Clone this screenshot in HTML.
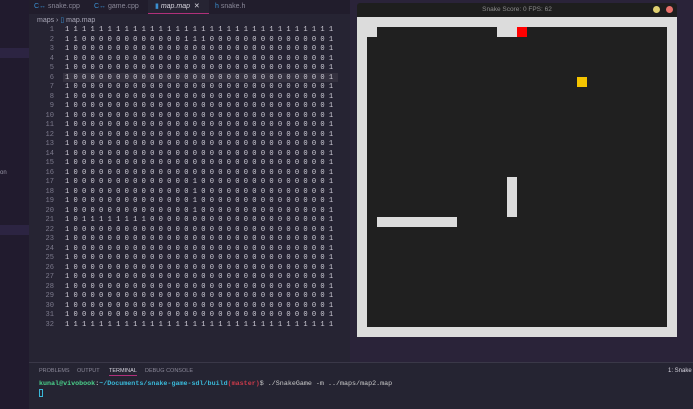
<!DOCTYPE html>
<html><head><style>
*{margin:0;padding:0;box-sizing:border-box}
body{width:693px;height:409px;overflow:hidden;background:#262433;position:relative;font-family:"Liberation Sans",sans-serif}
.abs{position:absolute}
#side{left:0;top:0;width:29px;height:409px;background:#211b2e}
#tabs{left:29px;top:0;width:664px;height:14px;background:#211d2c}
.tab{top:0;height:14px;font-size:7px;color:#8a8898;line-height:14px}
#code{left:30px;top:26px;font-family:"Liberation Mono",monospace;font-size:7.1px;line-height:9.5px;white-space:pre}
.ln{display:inline-block;width:24px;text-align:right;color:#7c7a8c;margin-right:11px}
.c{color:#d0ced8}
#game{left:350px;top:0;width:343px;height:362px;background:#2a2339}
</style></head><body>
<div class="abs" id="side"></div>
<div class="abs" style="left:0;top:48px;width:29px;height:10px;background:#2c2442"></div>
<div class="abs" style="left:0;top:225px;width:29px;height:10px;background:#2c2442"></div>
<div class="abs" style="left:0;top:170px;font-size:6px;color:#9a98a8">on</div>
<div class="abs" id="tabs"></div>
<div class="abs tab" style="left:34px"><span style="color:#3a8fd0">C↔</span> snake.cpp</div>
<div class="abs tab" style="left:94px"><span style="color:#3a8fd0">C↔</span> game.cpp</div>
<div class="abs" style="left:148px;top:0;width:61px;height:14px;background:#262433;border-bottom:1px solid #b0307a"></div>
<div class="abs tab" style="left:155px;color:#d8d6e0"><span style="color:#3a8fd0">▮</span> <i>map.map</i> &nbsp;✕</div>
<div class="abs tab" style="left:215px"><span style="color:#3a8fd0">h</span> snake.h</div>
<div class="abs" style="left:37px;top:16px;font-size:7px;color:#a8a6b6">maps › <span style="color:#3a8fd0">▯</span> map.map</div>
<div class="abs" style="left:63px;top:73px;width:275px;height:9px;background:#34313f"></div>
<div class="abs" id="code"><span class="ln">1</span><span class="c">1 1 1 1 1 1 1 1 1 1 1 1 1 1 1 1 1 1 1 1 1 1 1 1 1 1 1 1 1 1 1 1</span>
<span class="ln">2</span><span class="c">1 1 0 0 0 0 0 0 0 0 0 0 0 0 1 1 1 0 0 0 0 0 0 0 0 0 0 0 0 0 0 1</span>
<span class="ln">3</span><span class="c">1 0 0 0 0 0 0 0 0 0 0 0 0 0 0 0 0 0 0 0 0 0 0 0 0 0 0 0 0 0 0 1</span>
<span class="ln">4</span><span class="c">1 0 0 0 0 0 0 0 0 0 0 0 0 0 0 0 0 0 0 0 0 0 0 0 0 0 0 0 0 0 0 1</span>
<span class="ln">5</span><span class="c">1 0 0 0 0 0 0 0 0 0 0 0 0 0 0 0 0 0 0 0 0 0 0 0 0 0 0 0 0 0 0 1</span>
<span class="ln">6</span><span class="c">1 0 0 0 0 0 0 0 0 0 0 0 0 0 0 0 0 0 0 0 0 0 0 0 0 0 0 0 0 0 0 1</span>
<span class="ln">7</span><span class="c">1 0 0 0 0 0 0 0 0 0 0 0 0 0 0 0 0 0 0 0 0 0 0 0 0 0 0 0 0 0 0 1</span>
<span class="ln">8</span><span class="c">1 0 0 0 0 0 0 0 0 0 0 0 0 0 0 0 0 0 0 0 0 0 0 0 0 0 0 0 0 0 0 1</span>
<span class="ln">9</span><span class="c">1 0 0 0 0 0 0 0 0 0 0 0 0 0 0 0 0 0 0 0 0 0 0 0 0 0 0 0 0 0 0 1</span>
<span class="ln">10</span><span class="c">1 0 0 0 0 0 0 0 0 0 0 0 0 0 0 0 0 0 0 0 0 0 0 0 0 0 0 0 0 0 0 1</span>
<span class="ln">11</span><span class="c">1 0 0 0 0 0 0 0 0 0 0 0 0 0 0 0 0 0 0 0 0 0 0 0 0 0 0 0 0 0 0 1</span>
<span class="ln">12</span><span class="c">1 0 0 0 0 0 0 0 0 0 0 0 0 0 0 0 0 0 0 0 0 0 0 0 0 0 0 0 0 0 0 1</span>
<span class="ln">13</span><span class="c">1 0 0 0 0 0 0 0 0 0 0 0 0 0 0 0 0 0 0 0 0 0 0 0 0 0 0 0 0 0 0 1</span>
<span class="ln">14</span><span class="c">1 0 0 0 0 0 0 0 0 0 0 0 0 0 0 0 0 0 0 0 0 0 0 0 0 0 0 0 0 0 0 1</span>
<span class="ln">15</span><span class="c">1 0 0 0 0 0 0 0 0 0 0 0 0 0 0 0 0 0 0 0 0 0 0 0 0 0 0 0 0 0 0 1</span>
<span class="ln">16</span><span class="c">1 0 0 0 0 0 0 0 0 0 0 0 0 0 0 0 0 0 0 0 0 0 0 0 0 0 0 0 0 0 0 1</span>
<span class="ln">17</span><span class="c">1 0 0 0 0 0 0 0 0 0 0 0 0 0 0 1 0 0 0 0 0 0 0 0 0 0 0 0 0 0 0 1</span>
<span class="ln">18</span><span class="c">1 0 0 0 0 0 0 0 0 0 0 0 0 0 0 1 0 0 0 0 0 0 0 0 0 0 0 0 0 0 0 1</span>
<span class="ln">19</span><span class="c">1 0 0 0 0 0 0 0 0 0 0 0 0 0 0 1 0 0 0 0 0 0 0 0 0 0 0 0 0 0 0 1</span>
<span class="ln">20</span><span class="c">1 0 0 0 0 0 0 0 0 0 0 0 0 0 0 1 0 0 0 0 0 0 0 0 0 0 0 0 0 0 0 1</span>
<span class="ln">21</span><span class="c">1 0 1 1 1 1 1 1 1 1 0 0 0 0 0 0 0 0 0 0 0 0 0 0 0 0 0 0 0 0 0 1</span>
<span class="ln">22</span><span class="c">1 0 0 0 0 0 0 0 0 0 0 0 0 0 0 0 0 0 0 0 0 0 0 0 0 0 0 0 0 0 0 1</span>
<span class="ln">23</span><span class="c">1 0 0 0 0 0 0 0 0 0 0 0 0 0 0 0 0 0 0 0 0 0 0 0 0 0 0 0 0 0 0 1</span>
<span class="ln">24</span><span class="c">1 0 0 0 0 0 0 0 0 0 0 0 0 0 0 0 0 0 0 0 0 0 0 0 0 0 0 0 0 0 0 1</span>
<span class="ln">25</span><span class="c">1 0 0 0 0 0 0 0 0 0 0 0 0 0 0 0 0 0 0 0 0 0 0 0 0 0 0 0 0 0 0 1</span>
<span class="ln">26</span><span class="c">1 0 0 0 0 0 0 0 0 0 0 0 0 0 0 0 0 0 0 0 0 0 0 0 0 0 0 0 0 0 0 1</span>
<span class="ln">27</span><span class="c">1 0 0 0 0 0 0 0 0 0 0 0 0 0 0 0 0 0 0 0 0 0 0 0 0 0 0 0 0 0 0 1</span>
<span class="ln">28</span><span class="c">1 0 0 0 0 0 0 0 0 0 0 0 0 0 0 0 0 0 0 0 0 0 0 0 0 0 0 0 0 0 0 1</span>
<span class="ln">29</span><span class="c">1 0 0 0 0 0 0 0 0 0 0 0 0 0 0 0 0 0 0 0 0 0 0 0 0 0 0 0 0 0 0 1</span>
<span class="ln">30</span><span class="c">1 0 0 0 0 0 0 0 0 0 0 0 0 0 0 0 0 0 0 0 0 0 0 0 0 0 0 0 0 0 0 1</span>
<span class="ln">31</span><span class="c">1 0 0 0 0 0 0 0 0 0 0 0 0 0 0 0 0 0 0 0 0 0 0 0 0 0 0 0 0 0 0 1</span>
<span class="ln">32</span><span class="c">1 1 1 1 1 1 1 1 1 1 1 1 1 1 1 1 1 1 1 1 1 1 1 1 1 1 1 1 1 1 1 1</span></div>

<div class="abs" id="game"></div>
<div class="abs" style="left:357px;top:3px;width:320px;height:14px;background:#1e1e1e;border-radius:3px 3px 0 0"></div>
<div class="abs" style="left:357px;top:3px;width:320px;height:14px;line-height:14px;text-align:center;font-size:6.5px;color:#8c8c8c">Snake Score: 0 FPS: 62</div>
<div class="abs" style="left:653px;top:6px;width:7px;height:7px;border-radius:50%;background:#e0d070"></div>
<div class="abs" style="left:666px;top:6px;width:7px;height:7px;border-radius:50%;background:#e8706a"></div>
<div class="abs" style="left:357px;top:17px;width:320px;height:320px;background:#dcdcdc"></div>
<div class="abs" style="left:367px;top:27px;width:300px;height:300px;background:#202020"></div>
<div class="abs" style="left:367px;top:27px;width:10px;height:10px;background:#dcdcdc"></div>
<div class="abs" style="left:497px;top:27px;width:20px;height:10px;background:#dcdcdc"></div>
<div class="abs" style="left:517px;top:27px;width:10px;height:10px;background:#f00"></div>
<div class="abs" style="left:577px;top:77px;width:10px;height:10px;background:#f5c400"></div>
<div class="abs" style="left:507px;top:177px;width:10px;height:40px;background:#dcdcdc"></div>
<div class="abs" style="left:377px;top:217px;width:80px;height:10px;background:#dcdcdc"></div>

<div class="abs" style="left:29px;top:362px;width:664px;height:47px;background:#252432;border-top:1px solid #3a3848"></div>
<div class="abs" style="left:39px;top:368px;font-size:5.5px;color:#8a8898">PROBLEMS</div>
<div class="abs" style="left:77px;top:368px;font-size:5.5px;color:#8a8898">OUTPUT</div>
<div class="abs" style="left:109px;top:368px;font-size:5.5px;color:#d8d6e0;border-bottom:1px solid #b0307a;padding-bottom:1px">TERMINAL</div>
<div class="abs" style="left:145px;top:368px;font-size:5.5px;color:#8a8898">DEBUG CONSOLE</div>
<div class="abs" style="left:668px;top:368px;font-size:6px;color:#d8d6e0;white-space:nowrap">1: Snake</div>
<div class="abs" style="left:39px;top:380px;font-family:'Liberation Mono',monospace;font-size:6.7px;white-space:pre;font-weight:bold"><span style="color:#4ad08a">kunal@vivobook</span><span style="color:#ccc">:</span><span style="color:#3ab8d8">~/Documents/snake-game-sdl/build</span><span style="color:#c83a4a">(master)</span><span style="color:#ccc;font-weight:normal">$ ./SnakeGame -m ../maps/map2.map</span></div>
<div class="abs" style="left:39px;top:389px;width:4px;height:8px;border:1px solid #3ab8d8"></div>
</body></html>
